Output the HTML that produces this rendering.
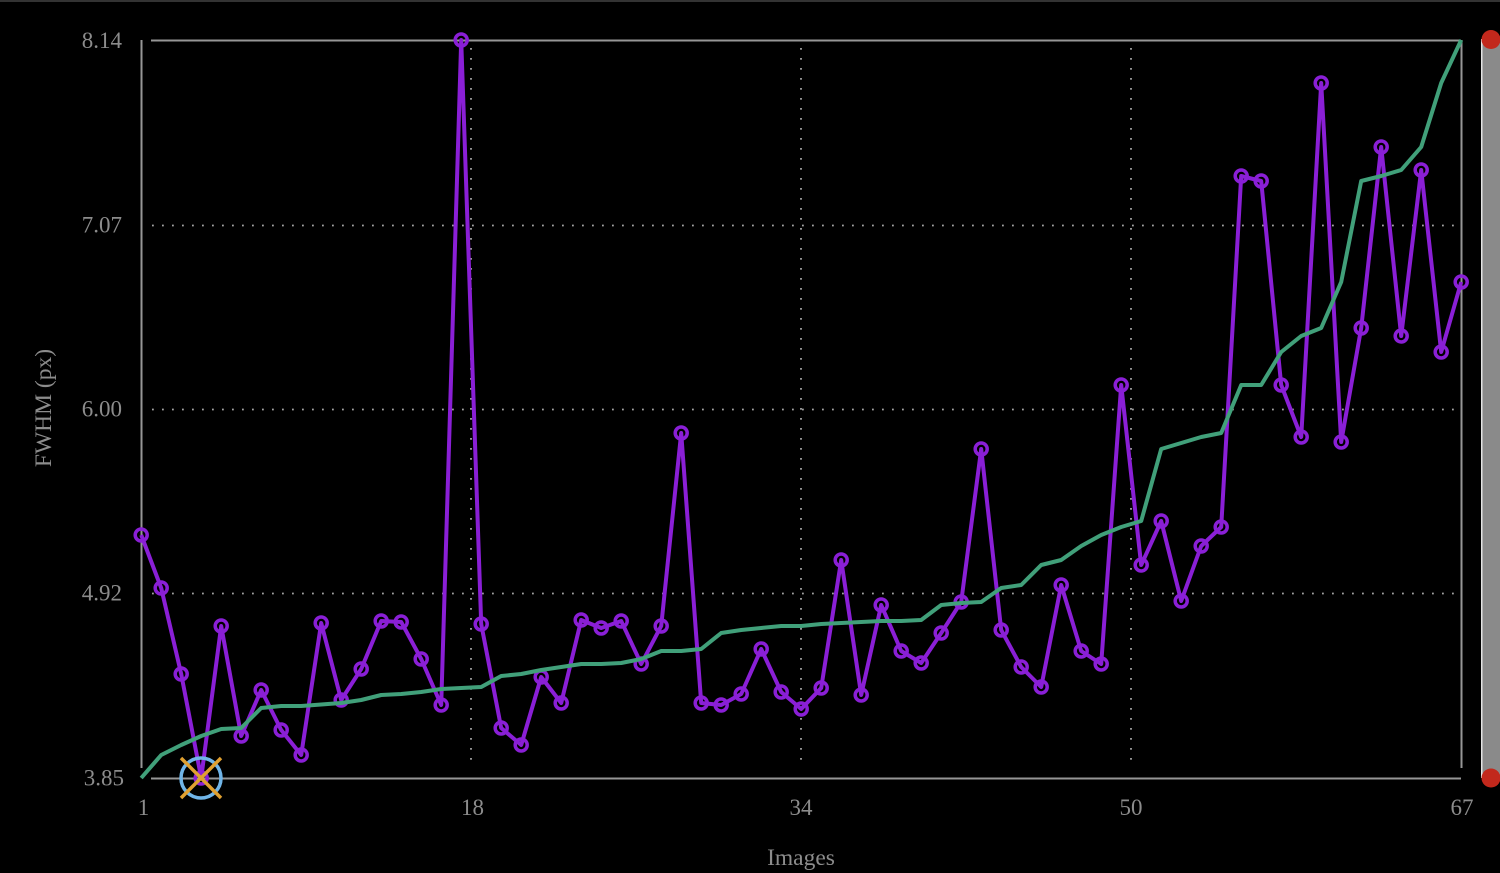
<!DOCTYPE html>
<html>
<head>
<meta charset="utf-8">
<style>
html,body{margin:0;padding:0;background:#000;width:1500px;height:873px;overflow:hidden}
svg{display:block}
text{font-family:"Liberation Serif",serif;font-size:23px;fill:#8c8c8c}
</style>
</head>
<body>
<svg width="1500" height="873" viewBox="0 0 1500 873" xmlns="http://www.w3.org/2000/svg">
<defs>
<marker id="m" markerUnits="userSpaceOnUse" markerWidth="20" markerHeight="20" refX="10" refY="10" overflow="visible">
<circle cx="10" cy="10" r="6" fill="none" stroke="#8a1fd6" stroke-width="3.5"/>
</marker>
</defs>
<rect x="0" y="0" width="1500" height="2" fill="#333"/>
<!-- grid -->
<g stroke="#a4a4a4" stroke-width="1.8" stroke-dasharray="1.8 8.2" fill="none">
<path d="M152 225.5H1461M152 409.5H1461M152 593.5H1461"/>
<path d="M471 48V768M801 48V768M1131 48V768"/>
</g>
<!-- axes -->
<g stroke="#969696" stroke-width="2" fill="none">
<path d="M151 40.5H1461M151 778.5H1461"/>
<path d="M141.5 40V768M1461.5 40V768"/>
</g>
<!-- purple series -->
<polyline transform="translate(0.2,0)" fill="none" stroke="#8a1fd6" stroke-width="4" stroke-linejoin="round" marker-start="url(#m)" marker-mid="url(#m)" marker-end="url(#m)" points="141,535 161,588 181,674 201,778 221,626 241,736 261,690 281,730 301,755 321,623 341,700 361,669 381,621 401,622 421,659 441,705 461,40 481,624 501,728 521,745 541,677 561,703 581,620 601,628 621,621 641,664 661,626 681,433 701,703 721,705 741,694 761,649 781,692 801,709 821,688 841,560 861,695 881,605 901,651 921,663 941,633 961,602 981,449 1001,630 1021,667 1041,687 1061,585 1081,651 1101,664 1121,385 1141,565 1161,521 1181,601 1201,546 1221,527 1241,176 1261,181 1281,385 1301,437 1321,83 1341,442 1361,328 1381,147 1401,336 1421,170 1441,352 1461,282"/>
<!-- green series -->
<polyline transform="translate(0.2,0)" fill="none" stroke="#41a07a" stroke-width="4" stroke-linejoin="round" points="141,778 161,755 181,745 201,736 221,729 241,728 261,708 281,706 301,706 321,704.5 341,703 361,700 381,695 401,694 421,692 441,689 461,688 481,687 501,676 521,674 541,670 561,667 581,664 601,664 621,663 641,659 661,651 681,651 701,649 721,633 741,630 761,628 781,626 801,626 821,624 841,623 861,622 881,621 901,621 921,620 941,605 961,603 981,602 1001,588 1021,585 1041,565 1061,560 1081,546 1101,535 1121,527 1141,521 1161,449 1181,443 1201,437 1221,433 1241,385 1261,385 1281,352 1301,336 1321,328 1341,282 1361,181 1381,176 1401,170 1421,147 1441,83 1461,40"/>
<!-- selected marker -->
<circle cx="201" cy="778" r="20" fill="none" stroke="#70b5e8" stroke-width="3.5"/>
<path d="M181 758L221 798M221 758L181 798" stroke="#e0a030" stroke-width="3.5" fill="none"/>
<!-- slider -->
<rect x="1481" y="39" width="19" height="739" fill="#8a8a8a"/>
<rect x="1481" y="39" width="1.5" height="739" fill="#e4e4e4"/>
<circle cx="1491" cy="39.5" r="9.5" fill="#c2281c"/>
<circle cx="1491" cy="778" r="9.5" fill="#c2281c"/>
<!-- y labels -->
<text x="122" y="48" text-anchor="end">8.14</text>
<text x="122" y="232.5" text-anchor="end">7.07</text>
<text x="122" y="416.5" text-anchor="end">6.00</text>
<text x="122" y="600.5" text-anchor="end">4.92</text>
<text x="124" y="785.5" text-anchor="end">3.85</text>
<!-- x labels -->
<text x="143.5" y="815" text-anchor="middle">1</text>
<text x="472.5" y="815" text-anchor="middle">18</text>
<text x="801" y="815" text-anchor="middle">34</text>
<text x="1131" y="815" text-anchor="middle">50</text>
<text x="1462" y="815" text-anchor="middle">67</text>
<!-- axis titles -->
<text x="801" y="865" text-anchor="middle" style="font-size:23.5px">Images</text>
<text transform="translate(51,408) rotate(-90)" text-anchor="middle" style="font-size:23.5px">FWHM (px)</text>
</svg>
</body>
</html>
